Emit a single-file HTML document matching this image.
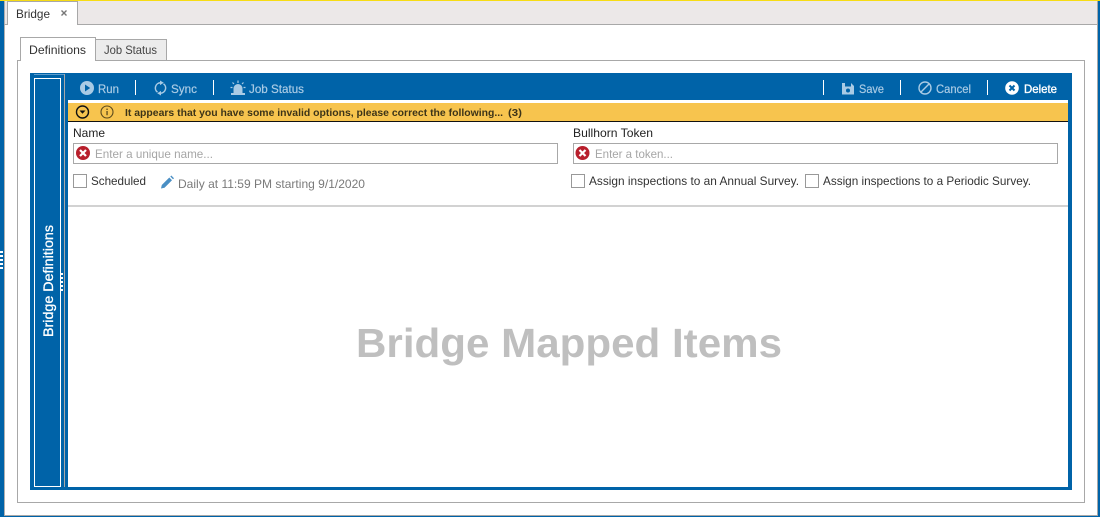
<!DOCTYPE html>
<html><head><meta charset="utf-8"><title>Bridge</title>
<style>
html,body{margin:0;padding:0;background:#fff;width:1100px;height:517px;overflow:hidden}
svg{display:block}
text{font-family:"Liberation Sans",sans-serif;font-size:12px}
</style></head><body>
<svg width="1100" height="517" viewBox="0 0 1100 517" xmlns="http://www.w3.org/2000/svg">
<g shape-rendering="crispEdges">
<rect width="1100" height="517" fill="#fff"/>
<rect x="4" y="1" width="1093" height="23" fill="#ece8e8"/>
<rect x="0" y="0" width="1100" height="1" fill="#f7dc14"/>
<rect x="0" y="1" width="4" height="516" fill="#0063a8"/>
<rect x="4" y="1" width="1" height="515" fill="#b0b0b0"/>
<rect x="1098" y="1" width="2" height="516" fill="#0063a8"/>
<rect x="1097" y="1" width="1" height="515" fill="#a8a8a8"/>
<rect x="4" y="516" width="1096" height="1" fill="#0063a8"/>
<rect x="4" y="515" width="1094" height="1" fill="#a8a8a8"/>
<rect x="4" y="24" width="1093" height="1" fill="#a8a8a8"/>
<rect x="7" y="1" width="71" height="24" fill="#a8a8a8"/>
<rect x="8" y="2" width="69" height="23" fill="#fff"/>
<rect x="17" y="60" width="1068" height="443" fill="#a8a8a8"/>
<rect x="18" y="61" width="1066" height="441" fill="#fff"/>
<rect x="95" y="39" width="72" height="22" fill="#a8a8a8"/>
<rect x="96" y="40" width="70" height="20" fill="#ececec"/>
<rect x="20" y="37" width="76" height="24" fill="#a8a8a8"/>
<rect x="21" y="38" width="74" height="24" fill="#fff"/>
<rect x="30" y="73" width="1042" height="417" fill="#0063a8"/>
<rect x="34" y="78" width="27" height="409" fill="#fff"/>
<rect x="35" y="79" width="25" height="407" fill="#0063a8"/>
<rect x="34" y="74" width="30" height="1" fill="#5c9ccc"/>
<rect x="64" y="74" width="1" height="413" fill="#a8a8a8"/>
<rect x="68" y="100" width="1000" height="387" fill="#fff"/>
<rect x="68" y="103" width="1000" height="18" fill="#f7c44e"/>
<rect x="68" y="121" width="1000" height="1" fill="#111"/>
<rect x="135" y="80" width="1" height="15" fill="#fff"/>
<rect x="213" y="80" width="1" height="15" fill="#fff"/>
<rect x="823" y="80" width="1" height="15" fill="#fff"/>
<rect x="900" y="80" width="1" height="15" fill="#fff"/>
<rect x="987" y="80" width="1" height="15" fill="#fff"/>
<rect x="73" y="143" width="485" height="21" fill="#a8a8a8"/>
<rect x="74" y="144" width="483" height="19" fill="#fff"/>
<rect x="573" y="143" width="485" height="21" fill="#a8a8a8"/>
<rect x="574" y="144" width="483" height="19" fill="#fff"/>
<rect x="73" y="174" width="14" height="14" fill="#999"/><rect x="74" y="175" width="12" height="12" fill="#fff"/>
<rect x="571" y="174" width="14" height="14" fill="#999"/><rect x="572" y="175" width="12" height="12" fill="#fff"/>
<rect x="805" y="174" width="14" height="14" fill="#999"/><rect x="806" y="175" width="12" height="12" fill="#fff"/>
<rect x="68" y="205" width="1000" height="2" fill="#d2d2d2"/>
<g fill="#fff">
<rect x="61" y="273" width="2" height="2"/><rect x="61" y="277" width="2" height="2"/><rect x="61" y="281" width="2" height="2"/><rect x="61" y="285" width="2" height="2"/><rect x="61" y="289" width="2" height="2"/>
<rect x="0" y="251" width="3" height="2"/><rect x="0" y="255" width="3" height="2"/><rect x="0" y="259" width="3" height="2"/><rect x="0" y="263" width="3" height="2"/><rect x="0" y="267" width="3" height="2"/>
</g>
</g>

<text x="16" y="18" textLength="34" lengthAdjust="spacingAndGlyphs" fill="#333">Bridge</text>
<path d="M61.500 10.500l5 5M66.500 10.500l-5 5" stroke="#777" stroke-width="1.400"/>
<text x="29" y="54" textLength="57" lengthAdjust="spacingAndGlyphs" fill="#333">Definitions</text>
<text x="104" y="54" textLength="53" lengthAdjust="spacingAndGlyphs" fill="#444">Job Status</text>

<!-- toolbar -->
<g fill="#a9cbe5">
<circle cx="87" cy="88" r="7"/>
<path d="M85 84.500l5.200 3.500-5.200 3.500z" fill="#0063a8"/>
<g stroke="#a9cbe5" stroke-width=".2">
<text x="98" y="93" textLength="21" lengthAdjust="spacingAndGlyphs">Run</text>
<text x="171" y="93" textLength="26" lengthAdjust="spacingAndGlyphs">Sync</text>
<text x="249" y="93" textLength="55" lengthAdjust="spacingAndGlyphs">Job Status</text>
<text x="859" y="93" textLength="25" lengthAdjust="spacingAndGlyphs">Save</text>
<text x="936" y="93" textLength="35" lengthAdjust="spacingAndGlyphs">Cancel</text>
</g>
<path d="M157.500 92.200A5.200 5.200 0 0 1 160.500 82.800M163.500 83.800A5.200 5.200 0 0 1 160.500 93.200" fill="none" stroke="#a9cbe5" stroke-width="1.500"/>
<path d="M160 80.500l3.800 2.300-3.800 2.300zM161 95.500l-3.800-2.300 3.800-2.300z"/>
<path d="M233.500 93v-4.500a4.500 4.500 0 0 1 9 0V93z"/>
<rect x="231" y="93" width="14" height="2"/>
<path d="M238 80.500v2.500M232.500 82.500l1.500 1.500M243.500 82.500l-1.500 1.500M230.500 87.500h2M243.500 87.500h2" stroke="#a9cbe5" stroke-width="1.200"/>
<path d="M842 83h9l3 3v8.500h-12z"/>
<rect x="845" y="83" width="6" height="3.500" fill="#0063a8"/>
<circle cx="848" cy="90.500" r="2" fill="#0063a8"/>
<circle cx="925" cy="88" r="6" fill="none" stroke="#a9cbe5" stroke-width="1.400"/>
<path d="M921 92l8-8" stroke="#a9cbe5" stroke-width="1.400"/>
</g>
<circle cx="1012" cy="88" r="6.800" fill="#fff"/>
<path d="M1009.500 85.500l5 5M1014.500 85.500l-5 5" stroke="#0063a8" stroke-width="2"/>
<text x="1024" y="93" textLength="33" lengthAdjust="spacingAndGlyphs" fill="#fff" stroke="#fff" stroke-width=".35">Delete</text>

<!-- warning -->
<circle cx="82.500" cy="112" r="6" fill="none" stroke="#111" stroke-width="1.400"/>
<path d="M79.500 110.500h6l-3 3.300z" fill="#111"/>
<circle cx="107" cy="112" r="6" fill="none" stroke="#5c4a1c" stroke-width="1.100"/>
<rect x="106.400" y="111" width="1.300" height="4.200" fill="#5c4a1c"/><rect x="106.400" y="108.600" width="1.300" height="1.400" fill="#5c4a1c"/>
<text x="125" y="116" textLength="378" lengthAdjust="spacingAndGlyphs" fill="#3d3418" style="font-weight:bold;font-size:10.500px">It appears that you have some invalid options, please correct the following...</text>
<text x="508" y="116" textLength="14" lengthAdjust="spacingAndGlyphs" fill="#3d3418" style="font-weight:bold;font-size:10.500px">(3)</text>

<!-- form -->
<text x="73" y="137" textLength="32" lengthAdjust="spacingAndGlyphs" fill="#222">Name</text>
<text x="573" y="137" textLength="80" lengthAdjust="spacingAndGlyphs" fill="#222">Bullhorn Token</text>
<circle cx="83" cy="153" r="7" fill="#b81f2c"/>
<path d="M80 150l6 6M86 150l-6 6" stroke="#fff" stroke-width="2.200"/>
<circle cx="582.500" cy="153" r="7" fill="#b81f2c"/>
<path d="M579.500 150l6 6M585.500 150l-6 6" stroke="#fff" stroke-width="2.200"/>
<text x="95" y="158" textLength="118" lengthAdjust="spacingAndGlyphs" fill="#a6a6a6">Enter a unique name...</text>
<text x="595" y="158" textLength="78" lengthAdjust="spacingAndGlyphs" fill="#a6a6a6">Enter a token...</text>
<text x="91" y="185" textLength="55" lengthAdjust="spacingAndGlyphs" fill="#333">Scheduled</text>
<path d="M161 188.500l.8-3.500 7.500-7.500 2.700 2.700-7.500 7.500zM170.300 176.500l1-1 2.700 2.700-1 1z" fill="#4a8fc4"/>
<text x="178" y="188" textLength="187" lengthAdjust="spacingAndGlyphs" fill="#7a7a7a">Daily at 11:59 PM starting 9/1/2020</text>
<text x="589" y="185" textLength="210" lengthAdjust="spacingAndGlyphs" fill="#333">Assign inspections to an Annual Survey.</text>
<text x="823" y="185" textLength="208" lengthAdjust="spacingAndGlyphs" fill="#333">Assign inspections to a Periodic Survey.</text>

<text transform="translate(53 337) rotate(-90)" textLength="112" lengthAdjust="spacingAndGlyphs" fill="#fff" stroke="#fff" stroke-width=".3" style="font-size:14px">Bridge Definitions</text>
<text x="356" y="357" textLength="426" lengthAdjust="spacingAndGlyphs" fill="#bfbfbf" style="font-weight:bold;font-size:41px">Bridge Mapped Items</text>
</svg>
</body></html>
